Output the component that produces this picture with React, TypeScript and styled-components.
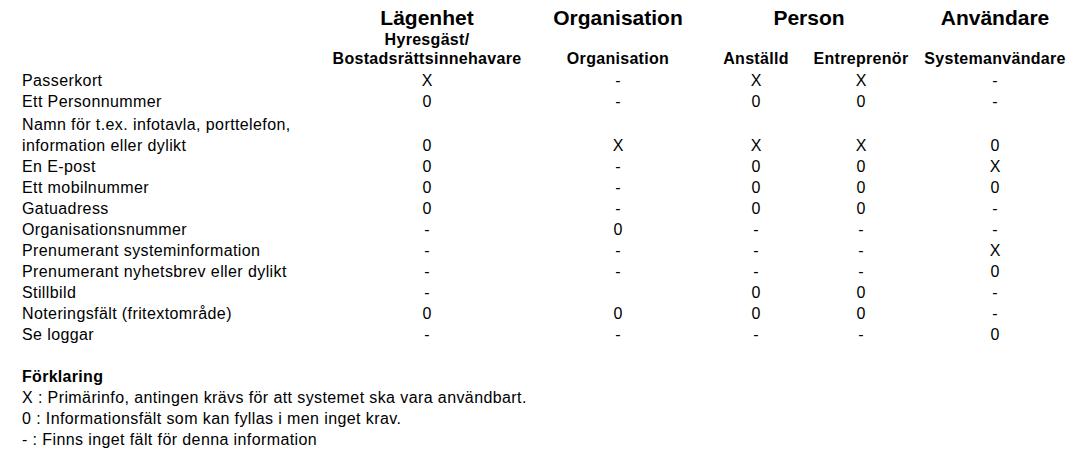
import styled, { createGlobalStyle } from 'styled-components'

const GlobalStyle = createGlobalStyle`
  html, body {
    margin: 0;
    padding: 0;
    background: #ffffff;
  }
  body {
    font-family: "Liberation Sans", Arial, sans-serif;
    color: #000000;
  }
`

const Page = styled.div`
  padding: 5px 0 0 22px;
`

const Matrix = styled.table`
  border-collapse: collapse;
  table-layout: fixed;
  width: 1054px;
  font-size: 16px;
`

const Col = styled.col<{ $width: number }>`
  width: ${(p) => p.$width}px;
`

const GroupHeader = styled.th`
  padding: 0;
  font-size: 21px;
  font-weight: bold;
  line-height: 25px;
  text-align: center;
  vertical-align: middle;
`

const SubHeader = styled.th`
  padding: 0 0 2px;
  height: 38px;
  font-size: 16px;
  font-weight: bold;
  line-height: 19px;
  letter-spacing: 0.3px;
  text-align: center;
  vertical-align: bottom;
  white-space: nowrap;
`

const Row = styled.tr<{ $tall?: boolean }>`
  height: ${(p) => (p.$tall ? 44 : 21)}px;
`

const Label = styled.td`
  padding: 0;
  line-height: 21px;
  letter-spacing: 0.4px;
  text-align: left;
  vertical-align: bottom;
  white-space: nowrap;
`

const Value = styled.td`
  padding: 0;
  line-height: 21px;
  text-align: center;
  vertical-align: bottom;
`

const Legend = styled.div`
  margin-top: 21px;
  font-size: 16px;
  line-height: 21px;
  letter-spacing: 0.4px;
`

const LegendTitle = styled.div`
  font-weight: bold;
  letter-spacing: 0.3px;
`

const LegendLine = styled.div``

type Cell = 'X' | '0' | '-' | ''

interface MatrixRow {
  label: string[]
  values: Cell[]
}

const rows: MatrixRow[] = [
  { label: ['Passerkort'], values: ['X', '-', 'X', 'X', '-'] },
  { label: ['Ett Personnummer'], values: ['0', '-', '0', '0', '-'] },
  {
    label: ['Namn för t.ex. infotavla, porttelefon,', 'information eller dylikt'],
    values: ['0', 'X', 'X', 'X', '0'],
  },
  { label: ['En E-post'], values: ['0', '-', '0', '0', 'X'] },
  { label: ['Ett mobilnummer'], values: ['0', '-', '0', '0', '0'] },
  { label: ['Gatuadress'], values: ['0', '-', '0', '0', '-'] },
  { label: ['Organisationsnummer'], values: ['-', '0', '-', '-', '-'] },
  { label: ['Prenumerant systeminformation'], values: ['-', '-', '-', '-', 'X'] },
  { label: ['Prenumerant nyhetsbrev eller dylikt'], values: ['-', '-', '-', '-', '0'] },
  { label: ['Stillbild'], values: ['-', '', '0', '0', '-'] },
  { label: ['Noteringsfält (fritextområde)'], values: ['0', '0', '0', '0', '-'] },
  { label: ['Se loggar'], values: ['-', '-', '-', '-', '0'] },
]

const columnWidths = [300, 210, 172, 104, 106, 162]

function App() {
  return (
    <Page>
      <GlobalStyle />
      <Matrix>
        <colgroup>
          {columnWidths.map((w, i) => (
            <Col key={i} $width={w} />
          ))}
        </colgroup>
        <thead>
          <tr>
            <GroupHeader />
            <GroupHeader>Lägenhet</GroupHeader>
            <GroupHeader>Organisation</GroupHeader>
            <GroupHeader colSpan={2}>Person</GroupHeader>
            <GroupHeader>Användare</GroupHeader>
          </tr>
          <tr>
            <SubHeader />
            <SubHeader>
              Hyresgäst/
              <br />
              Bostadsrättsinnehavare
            </SubHeader>
            <SubHeader>Organisation</SubHeader>
            <SubHeader>Anställd</SubHeader>
            <SubHeader>Entreprenör</SubHeader>
            <SubHeader>Systemanvändare</SubHeader>
          </tr>
        </thead>
        <tbody>
          {rows.map((row) => (
            <Row key={row.label.join(' ')} $tall={row.label.length > 1}>
              <Label>
                {row.label.map((line, i) => (
                  <span key={i}>
                    {i > 0 && <br />}
                    {line}
                  </span>
                ))}
              </Label>
              {row.values.map((v, i) => (
                <Value key={i}>{v}</Value>
              ))}
            </Row>
          ))}
        </tbody>
      </Matrix>
      <Legend>
        <LegendTitle>Förklaring</LegendTitle>
        <LegendLine>X : Primärinfo, antingen krävs för att systemet ska vara användbart.</LegendLine>
        <LegendLine>0 : Informationsfält som kan fyllas i men inget krav.</LegendLine>
        <LegendLine>- : Finns inget fält för denna information</LegendLine>
      </Legend>
    </Page>
  )
}

export default App
